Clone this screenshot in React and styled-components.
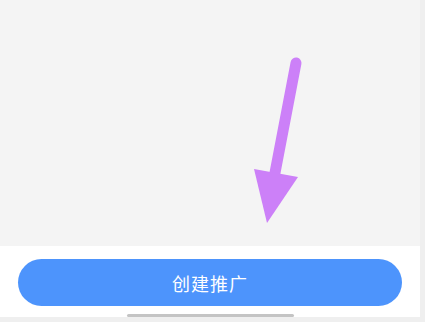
import React from 'react';
import styled, { createGlobalStyle } from 'styled-components';

const GlobalStyle = createGlobalStyle`
  html, body {
    margin: 0;
    padding: 0;
    background: #efefef;
  }
  body {
    font-family: "Noto Sans CJK SC", "Noto Sans", sans-serif;
  }
`;

const Frame = styled.div`
  display: flex;
  flex-direction: row;
  width: 425px;
  height: 322px;
  background: #efefef;
  overflow: hidden;
`;

const Screen = styled.div`
  display: flex;
  flex-direction: column;
  width: 420px;
  height: 317px;
`;

const Content = styled.div`
  position: relative;
  flex: 0 0 246px;
  background: #f4f4f4;
`;

const Annotation = styled.svg`
  position: absolute;
  left: 0;
  top: 0;
`;

const Footer = styled.div`
  flex: 1;
  display: flex;
  flex-direction: column;
  align-items: center;
  background: #ffffff;
  padding-top: 13px;
  box-sizing: border-box;
`;

const CreateButton = styled.button`
  width: 384px;
  height: 47px;
  border: none;
  border-radius: 24px;
  background: #4d94fc;
  color: #ffffff;
  font-family: "Noto Sans CJK SC", "Noto Sans", sans-serif;
  font-size: 18px;
  letter-spacing: 1px;
  display: flex;
  align-items: center;
  justify-content: center;
  padding: 0;
`;

const HomeIndicator = styled.div`
  width: 167px;
  height: 3px;
  border-radius: 2px;
  background: #c4c4c4;
  margin-top: 8px;
`;

export default function App() {
  return (
    <>
      <GlobalStyle />
      <Frame>
        <Screen>
          <Content>
            <Annotation width="420" height="246" viewBox="0 0 420 246">
              <line x1="296" y1="63" x2="274" y2="178" stroke="#cc80f8" strokeWidth="11" strokeLinecap="round" />
              <polygon points="254,169 298,177 267,223" fill="#cc80f8" />
            </Annotation>
          </Content>
          <Footer>
            <CreateButton>创建推广</CreateButton>
            <HomeIndicator />
          </Footer>
        </Screen>
      </Frame>
    </>
  );
}
